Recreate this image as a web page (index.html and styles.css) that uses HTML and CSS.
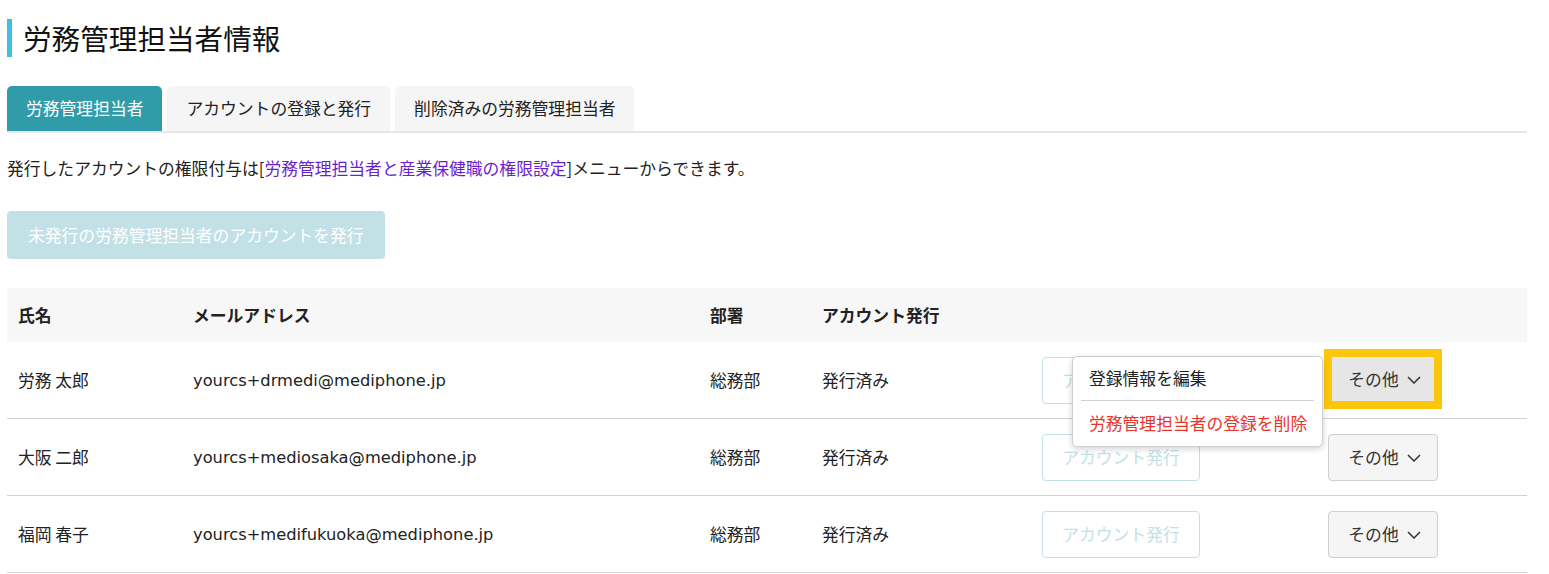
FILE: index.html
```html
<!DOCTYPE html>
<html lang="ja">
<head>
<meta charset="utf-8">
<title>労務管理担当者情報</title>
<link rel="stylesheet" href="styles.css">
</head>
<body>
<div class="page">
  <h1 class="title">労務管理担当者情報</h1>

  <div class="tabs">
    <div class="tab active">労務管理担当者</div>
    <div class="tab">アカウントの登録と発行</div>
    <div class="tab">削除済みの労務管理担当者</div>
  </div>

  <p class="info">発行したアカウントの権限付与は[<a class="link" href="#">労務管理担当者と産業保健職の権限設定</a>]メニューからできます。</p>

  <button class="primary-btn" disabled>未発行の労務管理担当者のアカウントを発行</button>

  <div class="table">
    <div class="row head">
      <div class="cell">氏名</div>
      <div class="cell">メールアドレス</div>
      <div class="cell">部署</div>
      <div class="cell">アカウント発行</div>
      <div class="cell"></div>
      <div class="cell"></div>
    </div>

    <div class="row">
      <div class="cell">労務 太郎</div>
      <div class="cell email">yourcs+drmedi@mediphone.jp</div>
      <div class="cell">総務部</div>
      <div class="cell">発行済み</div>
      <div class="cell"><button class="acct-btn" disabled>アカウント発行</button></div>
      <div class="cell more-cell">
        <button class="more-btn focused">その他<svg class="chev" viewBox="0 0 14 8" width="14" height="8"><path d="M1 1 L7 7 L13 1" fill="none" stroke="#333" stroke-width="1.5"/></svg></button>
        <div class="menu">
          <div class="menu-item">登録情報を編集</div>
          <div class="menu-sep"></div>
          <div class="menu-item danger">労務管理担当者の登録を削除</div>
        </div>
      </div>
    </div>

    <div class="row">
      <div class="cell">大阪 二郎</div>
      <div class="cell email">yourcs+mediosaka@mediphone.jp</div>
      <div class="cell">総務部</div>
      <div class="cell">発行済み</div>
      <div class="cell"><button class="acct-btn" disabled>アカウント発行</button></div>
      <div class="cell more-cell">
        <button class="more-btn">その他<svg class="chev" viewBox="0 0 14 8" width="14" height="8"><path d="M1 1 L7 7 L13 1" fill="none" stroke="#333" stroke-width="1.5"/></svg></button>
      </div>
    </div>

    <div class="row">
      <div class="cell">福岡 春子</div>
      <div class="cell email">yourcs+medifukuoka@mediphone.jp</div>
      <div class="cell">総務部</div>
      <div class="cell">発行済み</div>
      <div class="cell"><button class="acct-btn" disabled>アカウント発行</button></div>
      <div class="cell more-cell">
        <button class="more-btn">その他<svg class="chev" viewBox="0 0 14 8" width="14" height="8"><path d="M1 1 L7 7 L13 1" fill="none" stroke="#333" stroke-width="1.5"/></svg></button>
      </div>
    </div>
  </div>
</div>
</body>
</html>
```

FILE: styles.css
```css
* { box-sizing: border-box; }

html, body {
  margin: 0;
  padding: 0;
  background: #ffffff;
}

body {
  font-family: "DejaVu Sans", "Noto Sans CJK JP", sans-serif;
  font-size: 16.8px;
  color: #222222;
}

.page {
  padding: 19px 22px 0 7px;
}

.title {
  margin: 0;
  height: 38px;
  line-height: 38px;
  border-left: 5px solid #3ec1dc;
  padding-left: 11px;
  font-size: 28.6px;
  font-weight: normal;
  font-family: "Noto Sans CJK JP", sans-serif;
  color: #111111;
}

.tabs {
  display: flex;
  margin-top: 29px;
  border-bottom: 2px solid #e6e6e6;
  height: 47px;
}

.tab {
  height: 45px;
  line-height: 45px;
  padding: 0 19px;
  background: #f5f5f5;
  border-radius: 5px 5px 0 0;
  margin-right: 5px;
  font-family: "Noto Sans CJK JP", sans-serif;
  color: #222222;
}

.tab.active {
  background: #319ca9;
  color: #ffffff;
}

.info {
  margin: 23px 0 0 0;
  line-height: 24px;
  font-family: "Noto Sans CJK JP", sans-serif;
}

.link {
  color: #6c1fd1;
  text-decoration: none;
}

.primary-btn {
  display: block;
  margin-top: 31px;
  height: 48px;
  padding: 0 21px;
  border: none;
  border-radius: 4px;
  background: #c2e1e6;
  color: #ffffff;
  font-family: "Noto Sans CJK JP", sans-serif;
  font-size: 16.8px;
}

.table {
  margin-top: 29px;
}

.row {
  display: grid;
  grid-template-columns: 175px 517px 112px 220px 286px 210px;
  height: 77px;
  border-bottom: 1px solid #d2d2d2;
  font-family: "Noto Sans CJK JP", sans-serif;
}

.row.head {
  height: 54px;
  background: #f7f7f7;
  border-bottom: none;
  font-weight: bold;
}

.cell {
  display: flex;
  align-items: center;
  padding-left: 11px;
}

.cell.email {
  font-family: "DejaVu Sans", "Noto Sans CJK JP", sans-serif;
  font-size: 16.3px;
}

.acct-btn {
  height: 47px;
  width: 158px;
  border: 1px solid #c2e1e6;
  border-radius: 4px;
  background: #ffffff;
  color: #c2e1e6;
  font-family: "Noto Sans CJK JP", sans-serif;
  font-size: 16.8px;
  padding: 0;
}

.more-cell {
  position: relative;
}

.more-btn {
  display: flex;
  align-items: center;
  justify-content: center;
  gap: 8px;
  height: 47px;
  width: 110px;
  border: 1px solid #cfcfcf;
  border-radius: 4px;
  background: #f5f5f5;
  color: #333333;
  font-family: "Noto Sans CJK JP", sans-serif;
  font-size: 16.8px;
  padding: 0 0 0 3px;
}

.more-btn.focused {
  width: 118px;
  height: 60px;
  margin-left: -4px;
  margin-top: -3px;
  border: 8px solid #fdc60a;
  border-radius: 0;
  background: #e6e6e6;
}

.chev {
  display: block;
  margin-top: 2px;
}

.menu {
  position: absolute;
  left: -245px;
  top: 14px;
  width: 251px;
  height: 91px;
  background: #ffffff;
  border: 1px solid #cfcfcf;
  border-radius: 5px;
  box-shadow: 0 2px 6px rgba(0, 0, 0, 0.18);
  padding: 6px 8px 0 8px;
  z-index: 10;
}

.menu-item {
  height: 30px;
  line-height: 30px;
  padding-left: 8px;
  color: #222222;
  white-space: nowrap;
}

.menu-sep {
  height: 1px;
  background: #cfcfcf;
  margin: 7px 0 7px 0;
}

.menu-item.danger {
  color: #e8352b;
}
```
